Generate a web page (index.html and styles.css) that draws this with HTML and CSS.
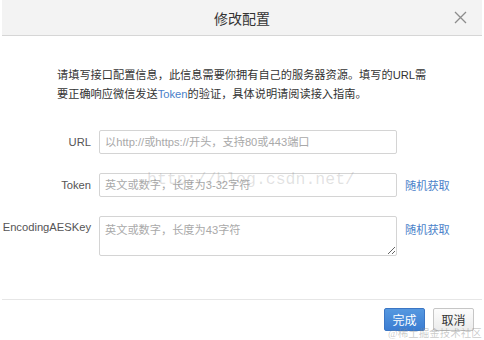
FILE: index.html
```html
<!DOCTYPE html>
<html lang="zh-CN">
<head>
  <meta charset="UTF-8" />
  <title>修改配置</title>
  <link rel="stylesheet" href="styles.css">
</head>
<body>

  <div class="dialog">
    <div class="dialog-head">
      <h3>修改配置</h3>
      <span class="close">
        <svg width="13" height="13" viewBox="0 0 13 13"><path d="M1 1L12 12M12 1L1 12" stroke="#8c8c8c" stroke-width="1.3" fill="none"/></svg>
      </span>
    </div>

    <div class="dialog-body">
      <p class="intro">请填写接口配置信息，此信息需要你拥有自己的服务器资源。填写的URL需要正确响应微信发送<a href="#">Token</a>的验证，具体说明请阅读接入指南。</p>

      <div class="form">
        <label>URL</label>
        <input type="text" placeholder="以http://或https://开头，支持80或443端口" />
        <span></span>

        <label>Token</label>
        <input type="text" placeholder="英文或数字，长度为3-32字符" />
        <a href="#" class="rand">随机获取</a>

        <label class="top">EncodingAESKey</label>
        <textarea placeholder="英文或数字，长度为43字符"></textarea>
        <a href="#" class="rand top">随机获取</a>
      </div>
    </div>

    <div class="dialog-foot">
      <button class="btn primary">完成</button>
      <button class="btn">取消</button>
    </div>
  </div>

  <!-- watermarks from the original capture -->
  <div class="mark-url">http://blog.csdn.net/</div>
  <div class="mark-corner">@稀土掘金技术社区</div>

</body>
</html>
```

FILE: styles.css
```css
body {
  margin: 0;
  background: #fff;
  font-family: "Liberation Sans", "Noto Sans CJK SC", sans-serif;
  color: #333;
  position: relative;
  width: 484px;
  height: 340px;
  overflow: hidden;
}
.dialog {
  width: 480px;
  margin-left: 2px;
}
.dialog-head {
  height: 35px;
  background: #f3f3f3;
  border-bottom: 1px solid #d6d6d6;
  display: flex;
  align-items: center;
  justify-content: center;
  position: relative;
}
.dialog-head h3 {
  margin: 0;
  font-size: 14px;
  font-weight: normal;
  color: #333;
}
.close {
  position: absolute;
  right: 15px;
  top: 11px;
  display: flex;
}
.dialog-body {
  padding: 30px 0 0 0;
  height: 263px;
  box-sizing: border-box;
}
.intro {
  margin: 0;
  padding-left: 55px;
  width: 375px;
  font-size: 11.2px;
  line-height: 19px;
  color: #333;
}
.intro a {
  color: #4a7fc9;
  text-decoration: none;
}
.form {
  margin-top: 26px;
  display: grid;
  grid-template-columns: 89px 298px auto;
  column-gap: 8px;
  row-gap: 19px;
  align-items: center;
}
.form label {
  text-align: right;
  font-size: 11.2px;
  color: #555;
}
.form .top {
  align-self: start;
  margin-top: 5px;
}
.form input, .form textarea {
  box-sizing: border-box;
  width: 298px;
  border: 1px solid #d4d4d4;
  border-radius: 2px;
  padding: 0 5px;
  font-family: "Liberation Sans", "Noto Sans CJK SC", sans-serif;
  font-size: 11.2px;
  color: #333;
}
.form input {
  height: 24px;
}
.form textarea {
  height: 40px;
  padding-top: 4px;
  resize: vertical;
}
.form input::placeholder, .form textarea::placeholder {
  color: #a9a9a9;
}
.rand {
  font-size: 11.2px;
  color: #4a7fc9;
  text-decoration: none;
}
.dialog-foot {
  border-top: 1px solid #e6e6e6;
  display: flex;
  justify-content: flex-end;
  gap: 8px;
  padding: 8px 8px 0 0;
}
.btn {
  width: 41px;
  height: 23px;
  padding: 0;
  font-family: "Liberation Sans", "Noto Sans CJK SC", sans-serif;
  font-size: 12px;
  color: #333;
  border: 1px solid #c6c6c6;
  border-radius: 2px;
  background: linear-gradient(#fcfcfc, #ececec);
}
.btn.primary {
  color: #fff;
  border-color: #3b76c4;
  background: linear-gradient(#5598e0, #3b7dd2);
}
.mark-url {
  position: absolute;
  left: 147px;
  top: 170px;
  font-family: "Liberation Mono", monospace;
  font-size: 16.5px;
  color: rgba(120, 120, 120, 0.22);
  pointer-events: none;
}
.mark-corner {
  position: absolute;
  left: 388px;
  top: 325px;
  font-family: "Liberation Serif", "Noto Sans CJK SC", serif;
  font-size: 10.5px;
  color: rgba(140, 140, 140, 0.45);
  pointer-events: none;
}
```
